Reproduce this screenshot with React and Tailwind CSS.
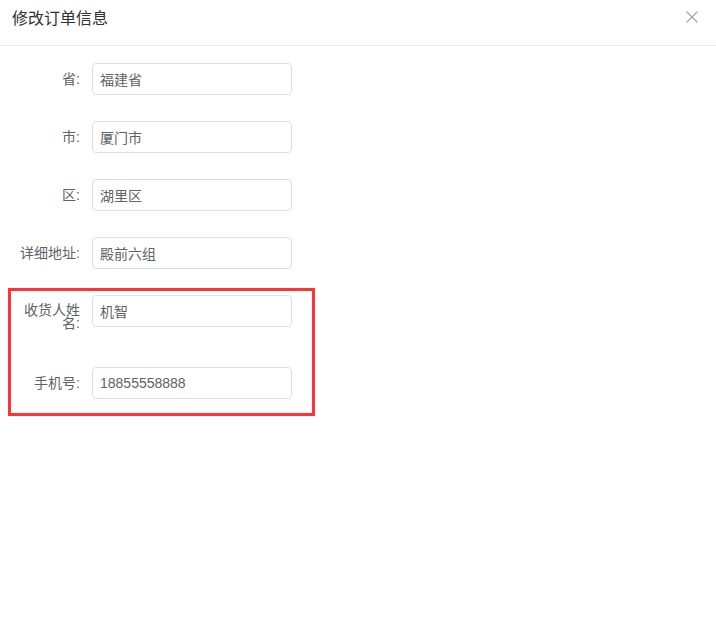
import React from "react"

const font = { fontFamily: '"Liberation Sans", "Noto Sans CJK SC", sans-serif' }

const Field = ({ label, value, className = "", labelClass = "leading-[32px]" }) => (
  <div className={`flex items-start ${className}`}>
    <label className={`w-[80px] shrink-0 pr-[12px] text-right text-[14px] text-[#606266] ${labelClass}`}>
      {label}
    </label>
    <input
      readOnly
      value={value}
      className="w-[200px] h-[32px] rounded-[4px] border border-[#dcdfe6] bg-white px-[7px] text-[14px] text-[#606266] outline-none"
      style={font}
    />
  </div>
)

export default function App() {
  return (
    <div className="w-[716px] h-[617px] bg-white overflow-hidden" style={font}>
      <div className="relative h-[46px] border-b border-[#e8eaec] px-[12px] pt-[7px]">
        <span className="text-[16px] leading-[24px] text-[#303133]">修改订单信息</span>
        <button className="absolute right-[17px] top-[10px] w-[14px] h-[14px] text-[#a0a3a8]">
          <svg viewBox="0 0 14 14" className="w-[14px] h-[14px]" fill="none" stroke="currentColor" strokeWidth="1.1">
            <path d="M1.5 1.5 L12.5 12.5 M12.5 1.5 L1.5 12.5" />
          </svg>
        </button>
      </div>

      <div className="pt-[17px]">
        <Field className="ml-[12px] mb-[26px]" label="省:" value="福建省" />
        <Field className="ml-[12px] mb-[26px]" label="市:" value="厦门市" />
        <Field className="ml-[12px] mb-[26px]" label="区:" value="湖里区" />
        <Field className="ml-[12px]" label="详细地址:" value="殿前六组" />

        <div className="mt-[19px] ml-[8px] w-[307px] border-[3px] border-[#ff3333] pt-[4px] pb-[14px]">
          <Field
            className="ml-[1px] mb-[40px]"
            label="收货人姓名:"
            value="机智"
            labelClass="h-[32px] pt-[9px] leading-[13px]"
          />
          <Field className="ml-[1px]" label="手机号:" value="18855558888" />
        </div>
      </div>
    </div>
  )
}
